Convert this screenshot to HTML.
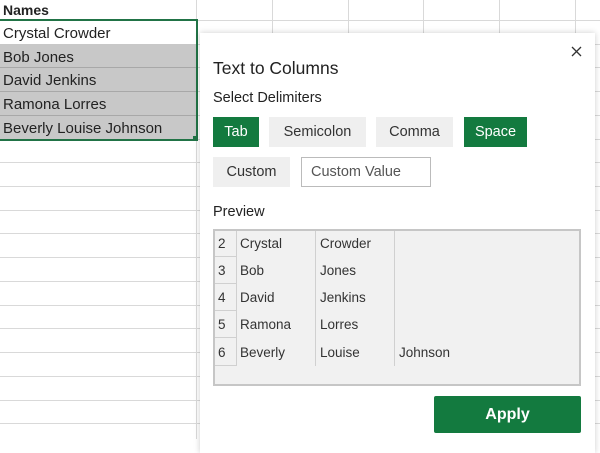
<!DOCTYPE html><html><head><style>
body{margin:0;width:600px;height:439px;overflow:hidden;background:#fff;font-family:"Liberation Sans",sans-serif;position:relative}
.a{position:absolute}
.vl{position:absolute;top:0;bottom:0;width:1px;background:#d9d9d9}
.hl{position:absolute;left:0;width:600px;height:1px;background:#d9d9d9}
.cell{position:absolute;left:3px;font-size:15px;color:#222}
.btn{position:absolute;height:30px;line-height:30px;text-align:center;font-size:14.5px;background:#efefef;color:#333}
.g{background:#137a3f;color:#fff}
.pt{position:absolute;font-size:13.5px;color:#333}
</style></head><body>
<div class="vl" style="left:196px"></div><div class="vl" style="left:272px"></div><div class="vl" style="left:348px"></div><div class="vl" style="left:423px"></div><div class="vl" style="left:499px"></div><div class="vl" style="left:575px"></div>
<div class="hl" style="top:20px"></div><div class="hl" style="top:44px"></div><div class="hl" style="top:67px"></div><div class="hl" style="top:91px"></div><div class="hl" style="top:115px"></div><div class="hl" style="top:139px"></div><div class="hl" style="top:162px"></div><div class="hl" style="top:186px"></div><div class="hl" style="top:210px"></div><div class="hl" style="top:233px"></div><div class="hl" style="top:257px"></div><div class="hl" style="top:281px"></div><div class="hl" style="top:305px"></div><div class="hl" style="top:328px"></div><div class="hl" style="top:352px"></div><div class="hl" style="top:376px"></div><div class="hl" style="top:400px"></div><div class="hl" style="top:423px"></div>
<div class="a" style="left:0;top:44px;width:196px;height:95px;background:#c8c8c8"></div>
<div class="hl" style="top:67px;width:196px;background:#a8a8a8"></div><div class="hl" style="top:91px;width:196px;background:#a8a8a8"></div><div class="hl" style="top:115px;width:196px;background:#a8a8a8"></div>
<div class="a" style="left:-2px;top:19px;width:196px;height:118px;border:2px solid #217346"></div>
<div class="a" style="left:193px;top:136px;width:5px;height:5px;background:#217346"></div>
<div class="cell" style="top:2px;font-weight:bold;font-size:14px">Names</div>
<div class="cell" style="top:25px">Crystal Crowder</div>
<div class="cell" style="top:49px">Bob Jones</div>
<div class="cell" style="top:72px">David Jenkins</div>
<div class="cell" style="top:96px">Ramona Lorres</div>
<div class="cell" style="top:120px">Beverly Louise Johnson</div>
<div class="a" style="left:200px;top:33px;width:395px;height:420px;background:#fff;box-shadow:0 0 6px rgba(0,0,0,.2)"></div>
<svg class="a" style="left:571px;top:46px" width="11" height="11"><path d="M1 1L10 10M10 1L1 10" stroke="#333" stroke-width="1.3"/></svg>
<div class="a" style="left:213px;top:58px;font-size:17.5px;color:#222">Text to Columns</div>
<div class="a" style="left:213px;top:90px;font-size:14.5px;color:#222">Select Delimiters</div>
<div class="btn g" style="left:213px;top:117px;width:46px">Tab</div>
<div class="btn" style="left:269px;top:117px;width:97px">Semicolon</div>
<div class="btn" style="left:376px;top:117px;width:77px">Comma</div>
<div class="btn g" style="left:464px;top:117px;width:63px">Space</div>
<div class="btn" style="left:213px;top:157px;width:77px">Custom</div>
<div class="btn" style="left:301px;top:157px;height:28px;line-height:28px;background:#fff;border:1px solid #bbb;color:#555;text-align:left;padding-left:9px;width:119px">Custom Value</div>
<div class="a" style="left:213px;top:204px;font-size:14.5px;color:#222">Preview</div>
<div class="a" style="left:213px;top:229px;width:364px;height:153px;background:#f1f1f1;border:2px solid #c6c6c6"></div>
<div class="a" style="left:215px;top:231px;width:21px;height:135px;border-right:1px solid #d0d0d0"></div>
<div class="a" style="left:215px;top:256px;width:21px;height:1px;background:#d0d0d0"></div><div class="a" style="left:215px;top:283px;width:21px;height:1px;background:#d0d0d0"></div><div class="a" style="left:215px;top:310px;width:21px;height:1px;background:#d0d0d0"></div><div class="a" style="left:215px;top:337px;width:21px;height:1px;background:#d0d0d0"></div><div class="a" style="left:215px;top:365px;width:21px;height:1px;background:#d0d0d0"></div>
<div class="a" style="left:315px;top:231px;width:1px;height:135px;background:#d0d0d0"></div>
<div class="a" style="left:394px;top:231px;width:1px;height:135px;background:#d0d0d0"></div>
<div class="pt" style="left:218px;top:236px">2</div><div class="pt" style="left:240px;top:236px">Crystal</div><div class="pt" style="left:320px;top:236px">Crowder</div>
<div class="pt" style="left:218px;top:263px">3</div><div class="pt" style="left:240px;top:263px">Bob</div><div class="pt" style="left:320px;top:263px">Jones</div>
<div class="pt" style="left:218px;top:290px">4</div><div class="pt" style="left:240px;top:290px">David</div><div class="pt" style="left:320px;top:290px">Jenkins</div>
<div class="pt" style="left:218px;top:317px">5</div><div class="pt" style="left:240px;top:317px">Ramona</div><div class="pt" style="left:320px;top:317px">Lorres</div>
<div class="pt" style="left:218px;top:345px">6</div><div class="pt" style="left:240px;top:345px">Beverly</div><div class="pt" style="left:320px;top:345px">Louise</div><div class="pt" style="left:399px;top:345px">Johnson</div>
<div class="btn g" style="left:434px;top:396px;width:147px;height:37px;line-height:37px;border-radius:2px;font-weight:bold;font-size:16px">Apply</div>
</body></html>
